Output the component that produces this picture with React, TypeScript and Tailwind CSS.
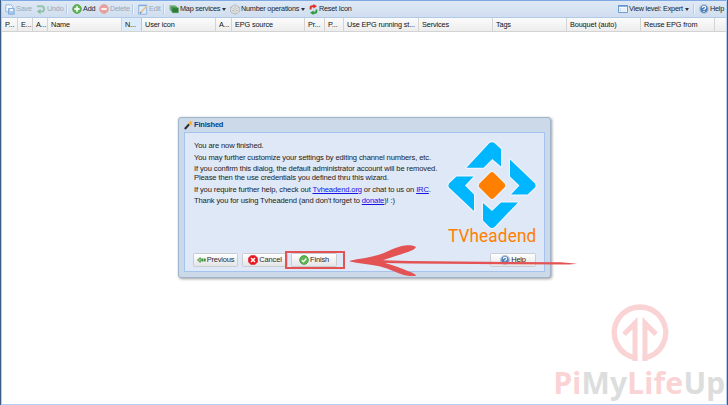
import React from "react";

const SaveIcon = () => (
  <svg className="h-[11px] w-[10px]" viewBox="0 0 10 11">
    <path d="M.8.8h5l2 2v5h-7z" fill="#f3f8fd" stroke="#94b8e2" />
    <path d="M3.5 4.5h5.7v5.7H3.5z" fill="#a9c8ea" stroke="#83aedd" />
    <path d="M5 5h3v2H5z" fill="#f3f8fd" />
  </svg>
);

const UndoIcon = () => (
  <svg className="h-[11px] w-[10px]" viewBox="0 0 10 11">
    <path d="M1 2.3h4.5a2.6 2.6 0 0 1 0 5.2H4" fill="none" stroke="#95c5ad" strokeWidth="2" />
    <path d="M4.6 4.8v5.4L.8 7.5z" fill="#8bbfa5" />
  </svg>
);

const DiscIcon = ({ minus = false }: { minus?: boolean }) => (
  <svg className="h-[10px] w-[10px]" viewBox="0 0 10 10">
    <circle cx="5" cy="5" r="4.4" fill={minus ? "#eaa29f" : "#5fb552"} stroke={minus ? "#e1938f" : "#3f9338"} strokeWidth=".6" />
    <path d="M2.3 5h5.4" stroke="#fff" strokeWidth="1.7" />
    {!minus && <path d="M5 2.3v5.4" stroke="#fff" strokeWidth="1.7" />}
  </svg>
);

const EditIcon = () => (
  <svg className="h-[11px] w-[10px]" viewBox="0 0 10 11">
    <path d="M.7 1.2h8v9h-8z" fill="#dfecf9" stroke="#8fb6df" />
    <path d="M.7 1.5h8" stroke="#7ba9da" strokeWidth="1.2" />
    <path d="M2.6 8.6 8.8 2" stroke="#e6c194" strokeWidth="1.8" />
    <path d="M2 9.3l1.1-1.2" stroke="#75849a" strokeWidth="1.4" />
  </svg>
);

const MapIcon = () => (
  <svg className="h-[10px] w-[10px]" viewBox="0 0 10 10">
    <path d="M.5 1.2h6v5h-6z" fill="#7fb58a" />
    <path d="M1.8 2.5h6.3v5H1.8z" fill="#4e9a53" />
    <path d="M3.2 3.8h6.3v5H3.2z" fill="#2c7d36" stroke="#5ba565" strokeWidth=".4" />
  </svg>
);

const NumberIcon = () => (
  <svg className="h-[11px] w-[10px]" viewBox="0 0 10 11">
    <path d="M5 .8l4.3 2.4v4.7L5 10.3.7 7.9V3.2z" fill="#e6e6e4" stroke="#a5a7a9" strokeWidth=".7" />
    <path d="M.9 3.3 5 5.3l4.1-2M5 5.3v4.8" fill="none" stroke="#b2b3b5" strokeWidth=".6" />
    <circle cx="5" cy="3" r=".6" fill="#8f9296" />
    <circle cx="3" cy="6.7" r=".6" fill="#8f9296" />
    <circle cx="7" cy="6.7" r=".6" fill="#8f9296" />
  </svg>
);

const ResetIcon = () => (
  <svg className="h-[11px] w-[9px]" viewBox="0 0 9 11">
    <path d="M1.6 5.400V3.600Q1.600 2.200 3.400 2.200H5" fill="none" stroke="#e0302a" strokeWidth="1.9" />
    <path d="M4.400 0v4.400L8 2.200z" fill="#e0302a" />
    <path d="M7.400 5.600v1.800Q7.400 8.800 5.600 8.800H4" fill="none" stroke="#2f9a3c" strokeWidth="1.9" />
    <path d="M4.600 6.600V11L1 8.800z" fill="#2f9a3c" />
  </svg>
);

const ViewIcon = () => (
  <svg className="h-[8px] w-[10px]" viewBox="0 0 10 8">
    <path d="M.5.5h9v7h-9z" fill="#f8fbff" stroke="#6c9bd3" />
    <path d="M.5 1h9" stroke="#5f90cd" strokeWidth="1.4" />
    <path d="M1.8 4h1.4M1.8 5.8h1.4" stroke="#8ab" strokeWidth=".8" />
    <path d="M4.2 4h4M4.2 5.8h4" stroke="#cbd9ea" strokeWidth=".7" />
  </svg>
);

const HelpIcon = () => (
  <svg className="h-[10px] w-[10px]" viewBox="0 0 10 10">
    <circle cx="5" cy="5" r="4.300" fill="#4d7fb9" stroke="#b4c5d8" strokeWidth="1.300" />
    <path d="M3.3 3.9Q3.4 2.4 5 2.4t1.7 1.4Q6.7 4.7 5 5.4v.8M5 7v1.1" fill="none" stroke="#fff" strokeWidth="1.1" />
  </svg>
);

const WandIcon = () => (
  <svg className="h-[10px] w-[9px]" viewBox="0 0 9 10">
    <path d="M.8 9 5.200 4.300" stroke="#2d2d30" strokeWidth="2" />
    <path d="M6 .3l.8 1.5 1.8-.2-.9 1.6.9 1.700-1.800-.3L5.900 6l-.5-1.700-1.700-.6L5.300 2.800z" fill="#f5b12d" />
  </svg>
);

const PreviousIcon = () => (
  <svg className="h-[6px] w-[9px]" viewBox="0 0 9 6">
    <path d="M.3 3 3.3.5v1.3h1v2.4h-1v1.3z" fill="#8cc685" stroke="#388433" strokeWidth=".6" />
    <path d="M4.700 1.600h1.600v2.800H4.700zM6.800 1.600h1.900v2.800H6.800z" fill="#43913d" />
  </svg>
);

const CancelIcon = () => (
  <svg className="h-[10px] w-[10px]" viewBox="0 0 10 10">
    <path d="M3 .4h4L9.6 3v4L7 9.6H3L.4 7V3z" fill="#e8161e" stroke="#d5141c" strokeWidth=".5" />
    <path d="M3 3l4 4M7 3 3 7" stroke="#fff" strokeWidth="1.5" />
  </svg>
);

const CheckIcon = () => (
  <svg className="h-[10px] w-[10px]" viewBox="0 0 10 10">
    <circle cx="5" cy="5" r="4.4" fill="#5db653" stroke="#398f35" strokeWidth=".7" />
    <path d="M2.8 5.1l1.6 1.6 3-3.2" fill="none" stroke="#fff" strokeWidth="1.3" />
  </svg>
);

const Caret = () => (
  <span className="ml-px h-0 w-0 border-x-[2px] border-t-[3px] border-x-transparent border-t-[#333]" />
);

const Separator = () => (
  <span className="mr-[4px] box-content h-[10px] w-px shrink-0 border-r border-[#eaf2fc] bg-[#b9cce3]" />
);

type ToolProps = {
  icon: React.ReactNode;
  label: string;
  className: string;
  disabled?: boolean;
  menu?: boolean;
};

const Tool = ({ icon, label, className, disabled, menu }: ToolProps) => (
  <button className={`flex shrink-0 items-center gap-px text-left tracking-[-0.23px] whitespace-nowrap ${disabled ? "text-[#9aa8b9]" : "text-[#20262e]"} ${className}`}>
    {icon}
    <span>{label}</span>
    {menu && <Caret />}
  </button>
);

const columns = [
  { label: "P...", width: "w-[16px]" },
  { label: "E...", width: "w-[15px]" },
  { label: "A...", width: "w-[15px]" },
  { label: "Name", width: "w-[74px]" },
  { label: "N...", width: "w-[20px]", active: true },
  { label: "User icon", width: "w-[74px]" },
  { label: "A...", width: "w-[16px]" },
  { label: "EPG source", width: "w-[73px]" },
  { label: "Pr...", width: "w-[20px]" },
  { label: "P...", width: "w-[19px]" },
  { label: "Use EPG running st...", width: "w-[75px]" },
  { label: "Services", width: "w-[74px]" },
  { label: "Tags", width: "w-[74px]" },
  { label: "Bouquet (auto)", width: "w-[74px]" },
  { label: "Reuse EPG from", width: "w-[74px]" },
];

const Toolbar = () => (
  <div className="flex h-[17px] items-center border-b border-[#b3cae7] bg-linear-to-b from-[#dfe9f5] to-[#cfdef0] pl-[3px] text-[7.3px] leading-none">
    <Tool className="w-[31px]" icon={<SaveIcon />} label="Save" disabled />
    <Tool className="w-[30px]" icon={<UndoIcon />} label="Undo" disabled />
    <Separator />
    <Tool className="w-[27px]" icon={<DiscIcon />} label="Add" />
    <Tool className="w-[33px]" icon={<DiscIcon minus />} label="Delete" disabled />
    <Separator />
    <Tool className="w-[25px]" icon={<EditIcon />} label="Edit" disabled />
    <Separator />
    <Tool className="w-[61px]" icon={<MapIcon />} label="Map services" menu />
    <Tool className="w-[79px]" icon={<NumberIcon />} label="Number operations" menu />
    <Tool className="w-[50px]" icon={<ResetIcon />} label="Reset Icon" />
    <div className="flex-1" />
    <Tool className="w-[75px]" icon={<ViewIcon />} label="View level: Expert" menu />
    <Separator />
    <Tool className="w-[27px]" icon={<HelpIcon />} label="Help" />
  </div>
);

const ColumnHeader = () => (
  <div className="flex h-[14px] border-b border-[#d3d3d3] bg-linear-to-b from-[#fbfbfb] to-[#ededed] text-[7.3px] leading-[14px] tracking-[-0.13px] text-[#111]">
    {columns.map((c, i) => (
      <div
        key={i}
        className={`shrink-0 overflow-hidden border-r pl-[3px] whitespace-nowrap ${c.width} ${c.active ? "border-[#a9cdf0] bg-[#dcecfb]" : "border-[#d4d4d4]"}`}
      >
        {c.label}
      </div>
    ))}
  </div>
);

const DialogButton = ({ icon, label, className }: { icon: React.ReactNode; label: string; className: string }) => (
  <button
    className={`flex h-[14px] items-center justify-center gap-px rounded-[1.5px] border border-[#c9ccd1] bg-linear-to-b from-white to-[#e4e5e7] text-[7.5px] leading-none tracking-[-0.18px] text-[#2b2b2b] ${className}`}
  >
    {icon}
    <span>{label}</span>
  </button>
);

const TvheadendLogo = () => (
  <div className="flex w-[90px] flex-col items-center">
    <svg className="h-[89px] w-[90px]" viewBox="0 0 90 89">
      <g strokeLinejoin="round" stroke="#eff4fc" strokeWidth="2.4" paintOrder="stroke">
        <g fill="#00b7ff">
          <path d="M19.500 26.700 42.500 2Q45 .3 47.500 2L54 8V25.500L45.300 18 36.500 26.700z" />
          <path d="M63 18.500 88 42.500Q89 44.500 88 46.500L80.500 53.500H64L72.500 44.500 63 35.500z" />
          <path d="M71 61.500 47.500 86Q45 88 42.500 86L36 79.500V62L45 70 54 61.500z" />
          <path d="M27 70 2 46.500Q1 44.500 2 42.500L9.500 35.500H26.500L18 44.500 27 53.500z" />
        </g>
        <path d="M43 32Q45 30 47 32L57.500 42.500Q59 44.500 57.500 46.500L47 57Q45 59 43 57L32.500 46.500Q31 44.500 32.500 42.500z" fill="#ff7f00" />
      </g>
    </svg>
    <div className="-mt-[3px] origin-center scale-x-[0.9] font-[Roboto] text-[19px] leading-[17px] tracking-[0.2px] whitespace-nowrap text-[#ff7f00]">
      TVheadend
    </div>
  </div>
);

const Dialog = () => (
  <section className="absolute top-[117px] left-[178px] flex h-[161px] w-[373px] flex-col rounded-[3px] border border-[#9fb3ca] bg-[#ccd9e8] px-[5px] pb-[5px] shadow-[1px_1px_3px_rgba(90,90,90,0.6)]">
    <header className="flex h-[14px] items-center gap-px text-[7.5px] leading-none font-bold tracking-[-0.2px] text-[#04408c]">
      <WandIcon />
      <h1>Finished</h1>
    </header>
    <div className="flex min-h-0 flex-1 flex-col border border-[#a5c3ef] bg-[#dfe8f6] pl-[8px] text-[7.6px] leading-[8.75px] tracking-[-0.13px] text-[#1c1c1c]">
      <div className="flex flex-1">
        <div className="flex w-[254px] flex-col gap-[2.9px] pt-[9px] pl-px whitespace-nowrap">
          <p>You are now finished.</p>
          <p>You may further customize your settings by editing channel numbers, etc.</p>
          <p>
            If you confirm this dialog, the default administrator account will be removed.
            <br />
            Please then the use credentials you defined thru this wizard.
          </p>
          <p>
            If you require further help, check out <a className="text-[#1414e6] underline">Tvheadend.org</a> or chat to us on <a className="text-[#1414e6] underline">IRC</a>.
          </p>
          <p>
            Thank you for using Tvheadend (and don't forget to <a className="text-[#1414e6] underline">donate</a>)! :)
          </p>
        </div>
        <div className="pt-[8px]">
          <TvheadendLogo />
        </div>
      </div>
      <footer className="flex pr-[8px] pb-[4px]">
        <DialogButton className="w-[45px]" icon={<PreviousIcon />} label="Previous" />
        <DialogButton className="ml-[4px] w-[46px]" icon={<CancelIcon />} label="Cancel" />
        <DialogButton className="ml-[3px] w-[46px]" icon={<CheckIcon />} label="Finish" />
        <DialogButton className="ml-auto w-[46px]" icon={<HelpIcon />} label="Help" />
      </footer>
    </div>
  </section>
);

const Annotation = () => (
  <>
    <div className="absolute top-[251px] left-[285px] h-[18px] w-[60px] border-2 border-[#e35353]" />
    <svg className="absolute top-[244px] left-[349px] h-[34px] w-[230px]" viewBox="0 0 230 34">
      <path
        d="M1 16.800C10 14.500 20 14 29 11 40 7.500 47 2.500 56 1.500 61 1 65 1.500 67 3 66 6 58 8.500 48 11.500L34 16.300 60 17 158 18 212 18.200 228 19.800 220 20.500 158 20.300 60 19.500 36 19C44 21 52 24 60 27.500 64 29 67 30.500 67 31.800 63 32.500 57 32 52 30 44 27 38 24 29 22 19 20 9 19.500 1 17.600z"
        fill="#e35353"
      />
    </svg>
  </>
);

const Watermark = () => (
  <div className="absolute top-[304px] left-[553px] flex w-[173px] flex-col items-center">
    <svg className="h-[58px] w-[58px]" viewBox="0 0 58 58">
      <path d="M26.500 54.200A25.700 25.700 0 1 1 31.500 54.200" fill="none" stroke="#fad4d4" strokeWidth="5.500" />
      <path d="M26.500 13V57H21.500V25.500L14.700 32 11.200 28.500z" fill="#fad4d4" />
      <path d="M31.500 13V57H36.500V25.500L43.300 32 46.800 28.500z" fill="#fad4d4" />
    </svg>
    <div className="mt-[5px] font-['Noto_Sans'] text-[30px] leading-[32px] font-bold tracking-[0.2px] whitespace-nowrap text-[#dcdddd]">
      <span className="text-[#fad4d4]">Pi</span>My<span className="text-[#fad4d4]">Life</span>Up
    </div>
  </div>
);

export default function App() {
  return (
    <main className="relative flex h-[405px] w-[728px] overflow-hidden bg-[#3d5c85] px-px font-['Liberation_Sans',Arial,sans-serif]">
      <div className="flex min-w-0 flex-1 flex-col border-x border-b border-[#b5cff2] bg-white">
        <div className="h-px bg-[#7ea8e3]" />
        <Toolbar />
        <ColumnHeader />
      </div>
      <Dialog />
      <Watermark />
      <Annotation />
    </main>
  );
}
